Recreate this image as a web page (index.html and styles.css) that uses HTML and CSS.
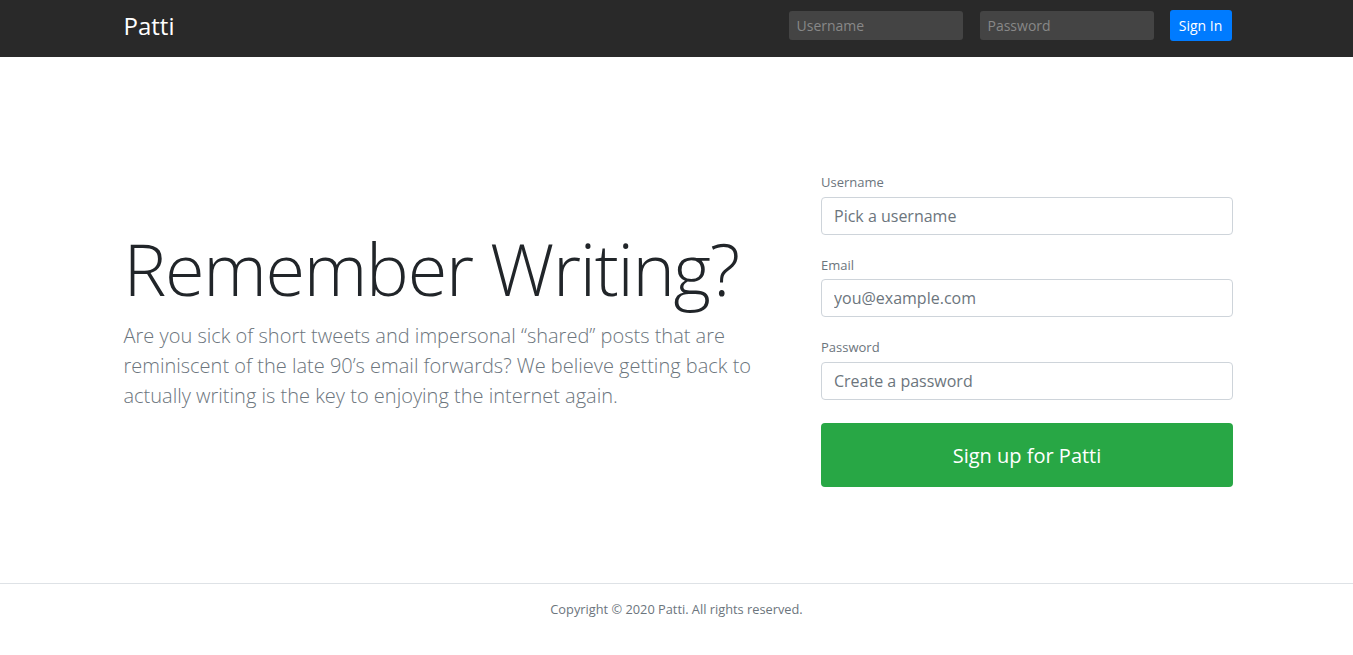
FILE: index.html
```html
<!DOCTYPE html>
<html lang="en">
<head>
<meta charset="utf-8">
<title>Patti</title>
<link rel="stylesheet" href="styles.css">
</head>
<body>
<nav class="navbar">
  <div class="container nav-inner">
    <a class="brand" href="#">Patti</a>
    <form class="nav-form">
      <input class="nav-input" type="text" placeholder="Username">
      <input class="nav-input" type="password" placeholder="Password">
      <button class="btn-signin" type="button">Sign In</button>
    </form>
  </div>
</nav>
<main class="main">
  <div class="container row">
    <div class="intro">
      <h1 class="display">Remember Writing?</h1>
      <p class="lead">Are you sick of short tweets and impersonal “shared” posts that are reminiscent of the late 90’s email forwards? We believe getting back to actually writing is the key to enjoying the internet again.</p>
    </div>
    <form class="signup">
      <div class="form-group">
        <label class="label">Username</label>
        <input class="form-control" type="text" placeholder="Pick a username">
      </div>
      <div class="form-group">
        <label class="label">Email</label>
        <input class="form-control" type="text" placeholder="you@example.com">
      </div>
      <div class="form-group">
        <label class="label">Password</label>
        <input class="form-control" type="password" placeholder="Create a password">
      </div>
      <button class="btn-signup" type="button">Sign up for Patti</button>
    </form>
  </div>
</main>
<footer class="footer">
  <p class="copy">Copyright © 2020 Patti. All rights reserved.</p>
</footer>
</body>
</html>
```

FILE: styles.css
```css
* { box-sizing: border-box; }
html, body { margin: 0; padding: 0; }
body {
  font-family: "Open Sans", "Noto Sans", sans-serif;
  font-size: 16px;
  line-height: 1.5;
  color: #212529;
  background: #fff;
}
.container {
  width: 1110px;
  margin: 0 auto;
}
.navbar {
  background: #292929;
  height: 57px;
}
.nav-inner {
  display: flex;
  align-items: center;
  justify-content: space-between;
  height: 57px;
}
.brand {
  color: #fff;
  text-decoration: none;
  font-size: 24px;
  line-height: 1;
  margin-left: 2px;
  margin-bottom: 6px;
}
.nav-form {
  display: flex;
  align-items: center;
  margin-bottom: 6px;
}
.nav-input {
  width: 174px;
  height: 29px;
  background: #444;
  border: none;
  border-radius: 3px;
  padding: 0 8px;
  margin-right: 17px;
  font-family: "Open Sans", sans-serif;
  font-size: 14px;
  color: #ddd;
  outline: none;
}
.nav-input::placeholder { color: #888; }
.nav-input + .nav-input { margin-right: 16px; }
.btn-signin {
  height: 31px;
  width: 62px;
  padding: 0;
  border: none;
  border-radius: 3px;
  background: #007bff;
  color: #fff;
  font-family: "Open Sans", sans-serif;
  font-size: 14px;
}
.main {
  padding: 116px 0 96px;
}
.row {
  display: flex;
  align-items: center;
}
.intro {
  flex: 0 0 635px;
  width: 635px;
  padding-left: 2px;
}
.display {
  font-size: 72px;
  font-weight: 300;
  line-height: 1.2;
  margin: 0 0 9px;
  letter-spacing: -1.3px;
}
.lead {
  font-size: 20px;
  font-weight: 300;
  line-height: 1.5;
  color: #6c757d;
  margin: 0 0 24px;
}
.signup {
  width: 412px;
  margin-left: auto;
  margin-right: -1.5px;
}
.form-group {
  margin-bottom: 21px;
}
.label {
  display: block;
  font-size: 13px;
  line-height: 19.5px;
  color: #6c757d;
  margin-bottom: 4px;
}
.form-control {
  display: block;
  width: 100%;
  height: 38px;
  padding: 6px 12px;
  font-family: "Open Sans", sans-serif;
  font-size: 16px;
  color: #495057;
  border: 1px solid #ced4da;
  border-radius: 4px;
  background: #fff;
}
.form-control::placeholder { color: #6c757d; }
.btn-signup {
  display: block;
  width: 100%;
  height: 64px;
  margin-top: 23.5px;
  border: none;
  border-radius: 4px;
  background: #28a745;
  color: #fff;
  font-family: "Open Sans", sans-serif;
  font-size: 20px;
}
.footer {
  border-top: 1px solid #dee2e6;
  text-align: center;
  padding-top: 16px;
}
.copy {
  margin: 0;
  font-size: 12.8px;
  line-height: 19px;
  color: #6c757d;
}
```
